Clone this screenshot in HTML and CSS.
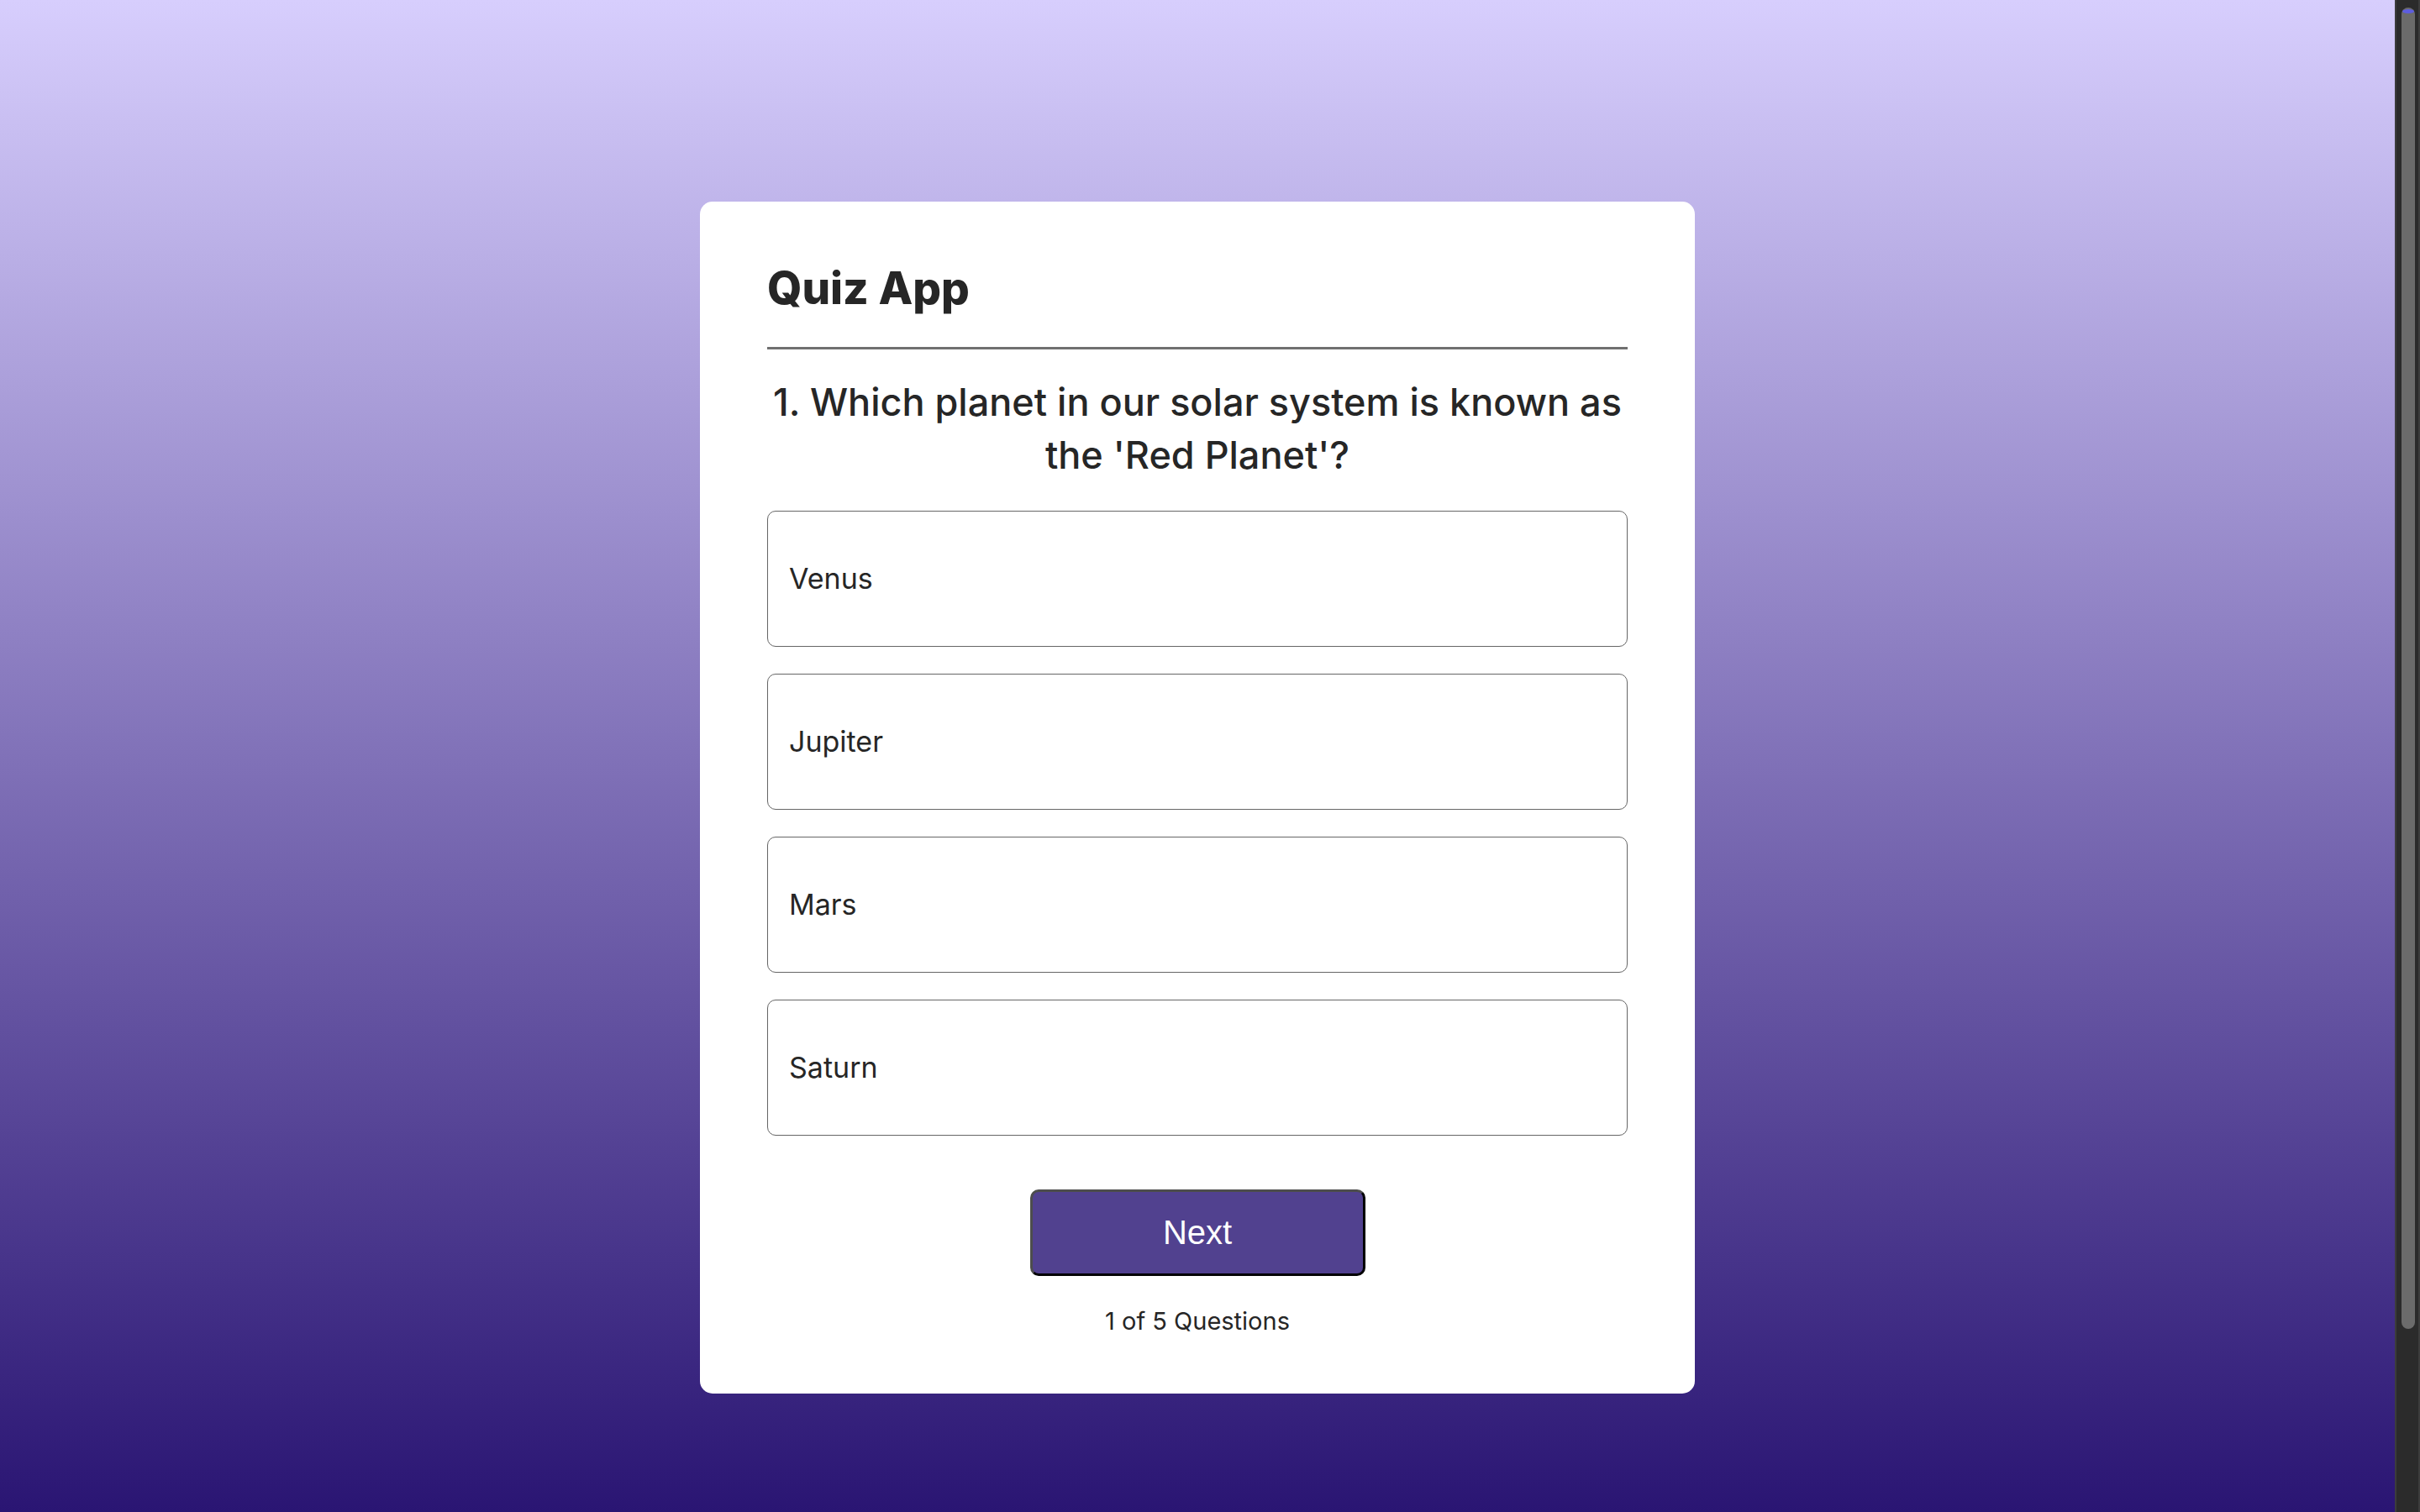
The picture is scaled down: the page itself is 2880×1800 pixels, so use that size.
FILE: index.html
```html
<!DOCTYPE html>
<html lang="en">

<head>
    <meta charset="UTF-8">
    <meta name="viewport" content="width=device-width, initial-scale=1.0">
    <title>Quiz App</title>
    <link rel="stylesheet" href="styles.css">
</head>

<body>
    <div class="app">
        <div class="quiz">
            <h1>Quiz App</h1>
            <h2 class="question">1. Which planet in our solar system is known as the 'Red Planet'?</h2>
            <div class="answers">
                <button class="answer">Venus</button>
                <button class="answer">Jupiter</button>
                <button class="answer">Mars</button>
                <button class="answer">Saturn</button>
            </div>
            <button class="next-btn">Next</button>
            <p class="count">1 of 5 Questions</p>
        </div>
    </div>

    <!-- page scrollbar -->
    <div class="scrollbar">
        <div class="scroll-thumb"></div>
    </div>
</body>

</html>
```

FILE: styles.css
```css
html {
    background: linear-gradient(#d7cefd, #2a1573) fixed;
}

body {
    font-family: Inter, "Noto Sans", sans-serif;
    margin: 0;
    padding: 0;
    color: #262626;
}

.app {
    display: flex;
    justify-content: center;
    padding: 240px 30px 141px 0;
}

.quiz {
    width: 1184px;
    box-sizing: border-box;
    background-color: #fff;
    border-radius: 15px;
    padding: 70px 80px 69px;
}

.quiz h1 {
    margin: 0;
    padding: 1px 0 38px;
    font-size: 53px;
    line-height: 64px;
    font-weight: 800;
    border-bottom: 3px solid #707070;
}

.question {
    margin: 31px 0 35px;
    font-size: 45px;
    line-height: 63px;
    font-weight: 500;
    text-align: center;
}

.answers {
    display: flex;
    flex-direction: column;
    gap: 32px;
}

.answer {
    font-family: Inter, "Noto Sans", sans-serif;
    font-size: 34px;
    line-height: 38px;
    color: #262626;
    text-align: left;
    background-color: #fff;
    padding: 61px 25px;
    border: 1px solid #666;
    border-radius: 10px;
    cursor: pointer;
}

.next-btn {
    display: block;
    width: 399px;
    height: 103px;
    margin: 64px auto 37px;
    font-family: "Liberation Sans", Arial, sans-serif;
    font-size: 40px;
    color: #fff;
    background-color: #51418f;
    border: 3px solid;
    border-color: #4d4d4d #000 #000 #4d4d4d;
    border-radius: 10px;
    cursor: pointer;
}

.count {
    margin: 0;
    text-align: center;
    font-size: 29px;
    line-height: 34px;
}

.scrollbar {
    position: fixed;
    top: 0;
    right: 0;
    width: 26px;
    height: 100vh;
    background-color: #2b2b2b;
    border-left: 2px solid #3c3c3c;
    border-right: 2px solid #3c3c3c;
}

.scroll-thumb {
    position: relative;
    height: 1573px;
    margin: 9px 4px 0 6px;
    background-color: #6b6b6b;
    border-radius: 8px;
}

.scroll-thumb::before {
    content: "";
    position: absolute;
    top: 2px;
    left: 1px;
    width: 14px;
    height: 5px;
    border-radius: 50%;
    background-color: #5d5de0;
}
```
